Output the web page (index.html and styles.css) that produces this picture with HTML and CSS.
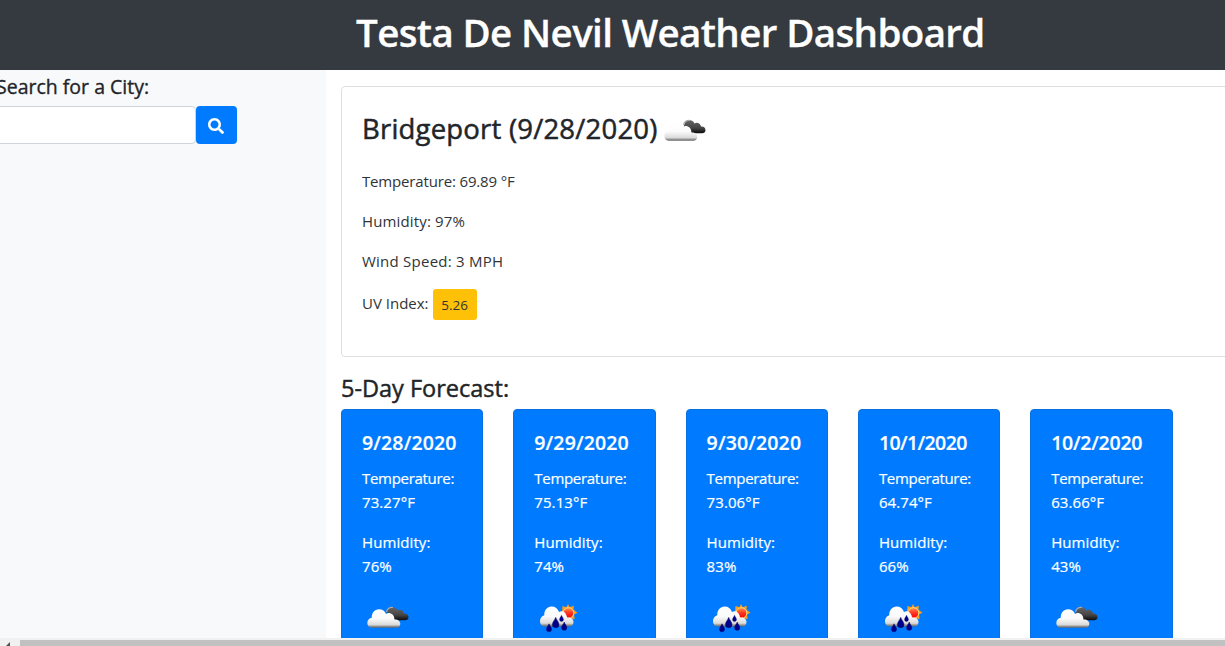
FILE: index.html
```
<!DOCTYPE html>
<html lang="en">
<head>
<meta charset="utf-8">
<title>Testa De Nevil Weather Dashboard</title>
<link rel="stylesheet" href="styles.css">
</head>
<body>
<svg class="defs" aria-hidden="true">
  <defs>
    <linearGradient id="white" x1="0" y1="0" x2="0" y2="1">
      <stop offset="0" stop-color="#fff"/><stop offset=".5" stop-color="#fbfbfb"/><stop offset=".84" stop-color="#dadada"/><stop offset=".92" stop-color="#999"/><stop offset="1" stop-color="#666"/>
    </linearGradient>
    <linearGradient id="dark" x1="0" y1="0" x2="0" y2="1">
      <stop offset="0" stop-color="#666"/><stop offset=".6" stop-color="#444"/><stop offset="1" stop-color="#0a0a0a"/>
    </linearGradient>
    <linearGradient id="sun" x1="0" y1="0" x2="0" y2="1">
      <stop offset="0" stop-color="#ff9a4d"/><stop offset=".5" stop-color="#f32"/><stop offset="1" stop-color="#f00"/>
    </linearGradient>
    <path id="drop" d="M0-5C.6-2.7 3-1 3 1.600A3 3 0 0 1-3 1.600C-3-1-.6-2.700 0-5Z" fill="#00008f" stroke="#000050" stroke-width=".5"/>
    <symbol id="clouds" viewBox="0 0 50 50">
      <path d="M29 27.300C25 26 24 22 25.500 18C26 15.500 29 13.800 31.500 14.300C33.800 14.600 35 16.200 35.500 17.500C38 15.900 41.500 17.300 42 20.500C45 20.300 46.500 22 46.500 24C46.500 26.300 45 27.300 43 27.300Z" fill="url(#dark)"/>
      <path d="M24.500 19C25 15.600 28 13.700 31 14.500" fill="none" stroke="#aaa" stroke-width="1.200"/>
      <path d="M9.500 34.700C7 34.700 5.300 32.500 5.300 30C5.300 27 7.300 25.300 9.800 24.800C9.500 20 12.500 16.300 17 16.300C20.500 16.300 23 18.300 24 21C27 18.800 32.300 20.700 32.500 26.500C36 26.300 38.300 28.300 38.300 31C38.300 33.300 36.500 34.700 34.300 34.700Z" fill="url(#white)"/>
    </symbol>
    <symbol id="rain" viewBox="0 1 50 50">
      <path d="M34 12L35.700 15.300L39.800 13.700L39.500 17.700L43.500 20.800L40 22.500L40.700 27L37 26.600L34 29L31 26L28 20L28.500 14L32.400 15.300Z" fill="#ff9d1c"/>
      <circle cx="34.500" cy="21" r="5.300" fill="url(#sun)" stroke="#ffdb78" stroke-width="1"/>
      <path d="M10.500 34.500C7.800 34.500 6 32 6 29C6 26 8 23.700 10.300 23.200C10 18 13.300 14.500 17.500 14.500C21.300 14.500 23.800 16.500 25 20C29 18 32.500 21 33 25.500C37 25 39.500 27 39.500 30C39.500 32.500 37.800 34.500 35.500 34.500Z" fill="url(#white)"/>
      <use href="#drop" transform="translate(15 36) scale(.84)"/>
      <use href="#drop" transform="translate(21.700 30.800) scale(1.080)"/>
      <use href="#drop" transform="translate(27.500 26.500) scale(.66)"/>
      <use href="#drop" transform="translate(30.200 34.300) scale(.86)"/>
    </symbol>
  </defs>
</svg>
<div class="page">
  <header class="topbar"><h1 class="title">Testa De Nevil Weather Dashboard</h1></header>
  <div class="layout">
    <aside class="sidebar">
      <h5 class="search-label">Search for a City:</h5>
      <div class="search">
        <input class="search-input" type="text" aria-label="City">
        <button class="search-button" aria-label="Search">
          <svg class="search-icon" viewBox="0 0 512 512"><path fill="currentColor" d="M505 442.700L405.300 343c-4.500-4.500-10.600-7-17-7H372c27.600-35.300 44-79.700 44-128C416 93.100 322.900 0 208 0S0 93.100 0 208s93.100 208 208 208c48.300 0 92.700-16.400 128-44v16.300c0 6.400 2.500 12.500 7 17l99.700 99.700c9.400 9.400 24.600 9.400 33.900 0l28.300-28.300c9.400-9.400 9.400-24.600.1-34zM208 336c-70.700 0-128-57.200-128-128 0-70.700 57.200-128 128-128 70.700 0 128 57.200 128 128 0 70.700-57.200 128-128 128z"/></svg>
        </button>
      </div>
    </aside>
    <main class="content">
      <section class="current">
        <h3 class="city"><span class="city-name">Bridgeport (9/28/2020)</span><svg class="weather"><use href="#clouds"/></svg></h3>
        <p class="stat temp">Temperature: 69.89 °F</p>
        <p class="stat hum">Humidity: 97%</p>
        <p class="stat wind">Wind Speed: 3 MPH</p>
        <p class="stat uv"><span>UV Index:</span><span class="badge">5.26</span></p>
      </section>
      <h4 class="forecast-title">5-Day Forecast:</h4>
      <div class="forecast">
        <article class="day"><h5 class="date">9/28/2020</h5><p class="reading"><span class="label">Temperature:</span><br>73.27°F</p><p class="reading">Humidity: <br>76%</p><svg class="weather"><use href="#clouds"/></svg></article>
        <article class="day"><h5 class="date">9/29/2020</h5><p class="reading"><span class="label">Temperature:</span><br>75.13°F</p><p class="reading">Humidity: <br>74%</p><svg class="weather"><use href="#rain"/></svg></article>
        <article class="day"><h5 class="date">9/30/2020</h5><p class="reading"><span class="label">Temperature:</span><br>73.06°F</p><p class="reading">Humidity: <br>83%</p><svg class="weather"><use href="#rain"/></svg></article>
        <article class="day"><h5 class="date date-oct1">10/1/2020</h5><p class="reading"><span class="label">Temperature:</span><br>64.74°F</p><p class="reading">Humidity: <br>66%</p><svg class="weather"><use href="#rain"/></svg></article>
        <article class="day"><h5 class="date date-oct2">10/2/2020</h5><p class="reading"><span class="label">Temperature:</span><br>63.66°F</p><p class="reading">Humidity: <br>43%</p><svg class="weather"><use href="#clouds"/></svg></article>
      </div>
    </main>
  </div>
  <div class="scrollbar">
    <div class="scroll-arrow"><svg class="arrow" viewBox="0 0 4 4"><path d="M4 0V4H0Z" fill="#505050"/></svg></div>
    <div class="scroll-thumb"></div>
  </div>
</div>
</body>
</html>
```
FILE: styles.css
```
* { box-sizing: border-box; }
body {
  margin: 0;
  overflow: hidden;
  font-family: "Open Sans", "Noto Sans", sans-serif;
  font-size: 15px;
  line-height: 24px;
  color: #212529;
  background: #fff;
}
h1, h3, h4, h5, p { margin: 0; white-space: nowrap; }
.defs { position: absolute; width: 0; height: 0; }
.page { display: grid; grid-template-rows: 70px minmax(0, 1fr) 8px; height: 646px; width: 1225px; overflow: hidden; }
.topbar { background: #343a40; padding: 8px 0 0 356px; }
.title { font-size: 38.500px; line-height: 48px; font-weight: 600; color: #fff; letter-spacing: -0.62px; -webkit-text-stroke: 0.3px; }
.layout { display: grid; grid-template-columns: 326px 1fr; min-height: 0; overflow: hidden; }
.sidebar { background: #f8f9fa; padding-top: 5px; }
.search-label { font-size: 19.500px; line-height: 24px; font-weight: 400; -webkit-text-stroke: 0.35px; margin-left: -4px; }
.search { display: flex; margin: 7px 0 0 -12px; }
.search-input { width: 208px; height: 38px; border: 1px solid #ced4da; border-radius: 4px; background: #fff; }
.search-button { display: flex; align-items: center; justify-content: center; width: 41px; height: 38px; padding: 1px 1px 0 0; border: 0; border-radius: 4px; background: #007bff; color: #fff; }
.search-icon { width: 16px; height: 16px; }
.content { padding: 16px 0 0 15px; min-width: 0; }
.current { width: 900px; height: 271px; border: 1px solid #dfdfdf; border-radius: 4px; padding: 19px 20px; }
.city { display: flex; align-items: flex-start; height: 50px; font-size: 27.500px; line-height: 45px; font-weight: 400; }
.city-name { width: 296.500px; letter-spacing: 0.2px; -webkit-text-stroke: 0.5px; }
.weather { display: block; flex: none; width: 50px; height: 50px; }
.stat { color: #303438; font-weight: 400; margin: 13px 0 16px; }
.stat + .stat { margin-top: 0; }
.temp { letter-spacing: -0.16px; }
.hum { letter-spacing: 0.15px; }
.wind { letter-spacing: 0.24px; }
.uv { display: flex; gap: 4px; line-height: 29px; }
.badge { display: block; width: 44px; height: 31px; border-radius: 3px; background: #ffc107; font-size: 13.500px; line-height: 32px; text-align: center; }
.forecast-title { font-size: 23.500px; line-height: 29px; font-weight: 400; -webkit-text-stroke: 0.45px; margin-top: 17px; margin-bottom: 6px; }
.forecast { display: grid; grid-template-columns: repeat(5, 142.300px); column-gap: 30px; }
.day { height: 260px; background: #007bff; border: 1px solid #0870df; border-radius: 4px; padding: 21px 20px; color: #fff; }
.day:last-child { width: 143px; }
.date { font-size: 19.500px; line-height: 24px; font-weight: 600; letter-spacing: 0.15px; -webkit-text-stroke: 0.2px; margin-bottom: 11px; }
.date-oct1 { letter-spacing: -0.6px; }
.date-oct2 { letter-spacing: -0.25px; }
.reading { font-weight: 400; -webkit-text-stroke: 0.2px; letter-spacing: 0.080px; margin-bottom: 16px; }
.label { letter-spacing: -0.3px; }
.day .weather { margin-top: -1px; }
.scrollbar { display: flex; background: #f1f1f1; padding-top: 2px; }
.scroll-arrow { width: 20px; padding: 2px 0 0 6px; }
.arrow { display: block; width: 4px; height: 4px; }
.scroll-thumb { flex: 1; background: #c1c1c1; }
```
